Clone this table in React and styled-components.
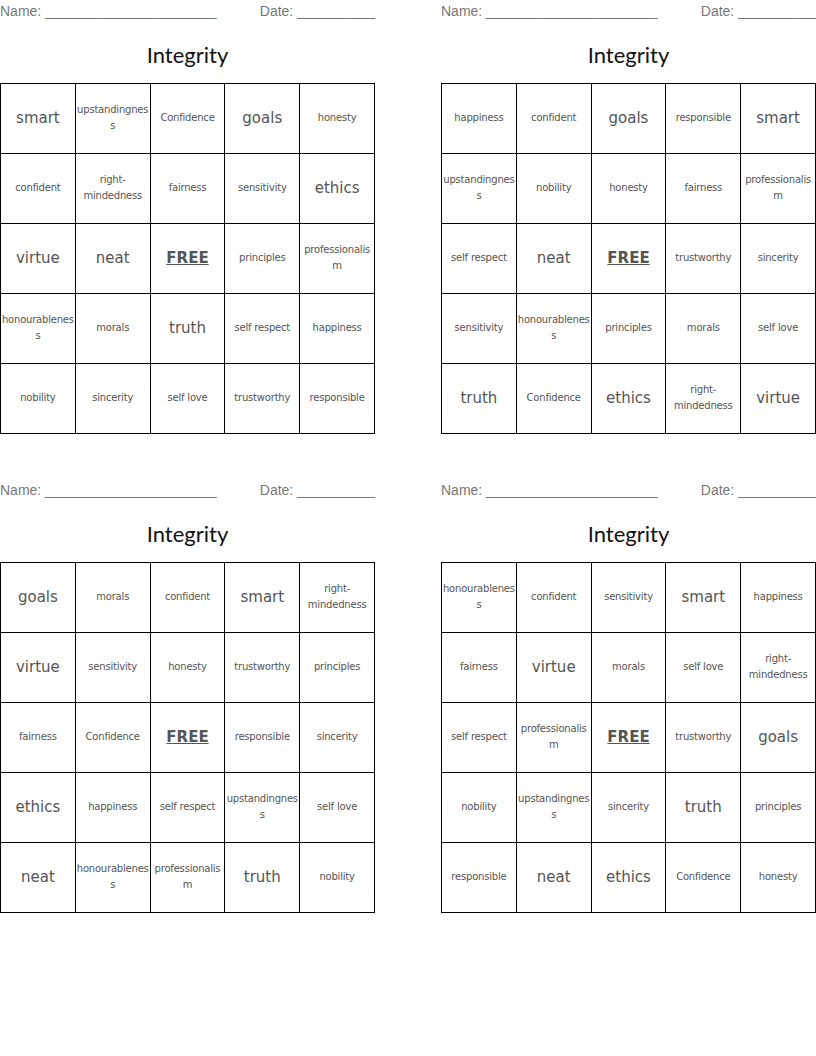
import React from 'react';
import styled, { createGlobalStyle } from 'styled-components';

const GlobalStyle = createGlobalStyle`
  html, body {
    margin: 0;
    padding: 0;
    background: #ffffff;
  }
`;

const Page = styled.div`
  width: 816px;
  display: grid;
  grid-template-columns: 375px 375px;
  column-gap: 66px;
  row-gap: 45px;
`;

const Card = styled.div`
  display: flex;
  flex-direction: column;
`;

const InfoRow = styled.div`
  display: flex;
  justify-content: space-between;
  height: 22px;
  align-items: center;
  font-family: "Liberation Sans", Arial, sans-serif;
  font-size: 14px;
  color: #777;
  white-space: nowrap;
`;

const Title = styled.h1`
  margin: 0;
  height: 61px;
  box-sizing: border-box;
  padding-top: 4px;
  display: flex;
  align-items: center;
  justify-content: center;
  font-family: Lato, "Open Sans", sans-serif;
  font-weight: 400;
  font-size: 22px;
  color: #111;
`;

const Board = styled.div`
  display: grid;
  grid-template-columns: repeat(5, 1fr);
  grid-auto-rows: 70px;
  width: 375px;
  box-sizing: border-box;
  border-top: 1px solid #000;
  border-left: 1px solid #000;
`;

const Cell = styled.div`
  border-right: 1px solid #000;
  border-bottom: 1px solid #000;
  display: flex;
  align-items: center;
  justify-content: center;
  text-align: center;
  overflow: hidden;
  overflow-wrap: anywhere;
  line-height: ${p => (p.$big ? '20px' : '16px')};
  font-family: "DejaVu Sans", Verdana, sans-serif;
  font-size: ${p => (p.$big ? '15px' : '10px')};
  letter-spacing: ${p => (p.$big ? '0' : '-0.2px')};
  font-weight: ${p => (p.$free ? 700 : 400)};
  text-decoration: ${p => (p.$free ? 'underline' : 'none')};
  color: #555;
  padding: 0 0 2px;
  min-width: 0;
`;

const BIG = ['smart', 'goals', 'ethics', 'virtue', 'neat', 'truth', 'FREE'];

const cards = [
  [
    'smart', 'upstandingness', 'Confidence', 'goals', 'honesty',
    'confident', 'right-mindedness', 'fairness', 'sensitivity', 'ethics',
    'virtue', 'neat', 'FREE', 'principles', 'professionalism',
    'honourableness', 'morals', 'truth', 'self respect', 'happiness',
    'nobility', 'sincerity', 'self love', 'trustworthy', 'responsible',
  ],
  [
    'happiness', 'confident', 'goals', 'responsible', 'smart',
    'upstandingness', 'nobility', 'honesty', 'fairness', 'professionalism',
    'self respect', 'neat', 'FREE', 'trustworthy', 'sincerity',
    'sensitivity', 'honourableness', 'principles', 'morals', 'self love',
    'truth', 'Confidence', 'ethics', 'right-mindedness', 'virtue',
  ],
  [
    'goals', 'morals', 'confident', 'smart', 'right-mindedness',
    'virtue', 'sensitivity', 'honesty', 'trustworthy', 'principles',
    'fairness', 'Confidence', 'FREE', 'responsible', 'sincerity',
    'ethics', 'happiness', 'self respect', 'upstandingness', 'self love',
    'neat', 'honourableness', 'professionalism', 'truth', 'nobility',
  ],
  [
    'honourableness', 'confident', 'sensitivity', 'smart', 'happiness',
    'fairness', 'virtue', 'morals', 'self love', 'right-mindedness',
    'self respect', 'professionalism', 'FREE', 'trustworthy', 'goals',
    'nobility', 'upstandingness', 'sincerity', 'truth', 'principles',
    'responsible', 'neat', 'ethics', 'Confidence', 'honesty',
  ],
];

const BingoCard = ({ words }) => (
  <Card>
    <InfoRow>
      <span>Name: ______________________</span>
      <span>Date: __________</span>
    </InfoRow>
    <Title>Integrity</Title>
    <Board>
      {words.map((w, i) => (
        <Cell key={i} $big={BIG.includes(w)} $free={w === 'FREE'}>
          <span>{w}</span>
        </Cell>
      ))}
    </Board>
  </Card>
);

const App = () => (
  <>
    <GlobalStyle />
    <Page>
      {cards.map((words, i) => (
        <BingoCard key={i} words={words} />
      ))}
    </Page>
  </>
);

export default App;
